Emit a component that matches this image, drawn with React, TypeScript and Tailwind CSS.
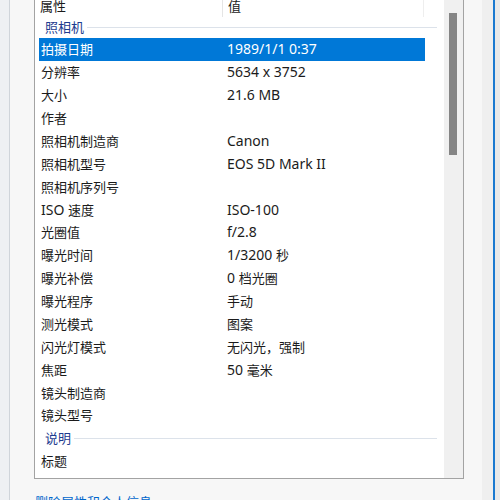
import React from 'react';

const cjk = /([\u2e80-\u9fff\u3000-\u303f\uff00-\uffef]+)/;

// CJK runs get a slightly smaller size so widths match the Windows UI fonts
function T({ s }: { s: string }) {
  return (
    <>
      {s.split(cjk).map((p, i) =>
        cjk.test(p) ? <span key={i} className="text-[13px]">{p}</span> : <span key={i}>{p}</span>
      )}
    </>
  );
}

const camera: [string, string][] = [
  ['拍摄日期', '1989/1/1 0:37'],
  ['分辨率', '5634 x 3752'],
  ['大小', '21.6 MB'],
  ['作者', ''],
  ['照相机制造商', 'Canon'],
  ['照相机型号', 'EOS 5D Mark II'],
  ['照相机序列号', ''],
  ['ISO 速度', 'ISO-100'],
  ['光圈值', 'f/2.8'],
  ['曝光时间', '1/3200 秒'],
  ['曝光补偿', '0 档光圈'],
  ['曝光程序', '手动'],
  ['测光模式', '图案'],
  ['闪光灯模式', '无闪光，强制'],
  ['焦距', '50 毫米'],
  ['镜头制造商', ''],
  ['镜头型号', ''],
];

function Row({ name, value, selected }: { name: string; value: string; selected?: boolean }) {
  return (
    <div
      className={`ml-[4px] w-[386px] h-[22.875px] shrink-0 flex items-center leading-none ${
        selected ? 'bg-[#0078d7] text-white' : 'text-[#1b1b1b]'
      }`}
    >
      <div className="w-[188px] pl-[2px] whitespace-nowrap"><T s={name} /></div>
      <div className="whitespace-nowrap"><T s={value} /></div>
    </div>
  );
}

function Group({ label, height }: { label: string; height: string }) {
  return (
    <div className={`${height} shrink-0 flex items-center pl-[10px] pr-[7px] gap-[3px]`}>
      <span className="text-[13px] leading-none text-[#1e3c8f]">{label}</span>
      <div className="flex-1 h-px bg-[#dce2ea]" />
    </div>
  );
}

export default function App() {
  return (
    <div className="w-[500px] h-[500px] overflow-hidden flex font-['Noto_Sans','Noto_Sans_CJK_SC',sans-serif] text-[14px]">
      <div className="w-[9px] bg-[#eef0f3]" />
      <div className="w-px bg-[#cfd4da]" />
      <div className="w-[472px] bg-[#f7f7f7] flex flex-col pl-[24px]">
        <div className="-mt-[6px] h-[485px] w-[430px] shrink-0 border border-[#a3a3a3] bg-white flex overflow-hidden">
          <div className="flex-1 flex flex-col overflow-hidden">
            <div className="h-[22px] shrink-0 flex items-stretch leading-none text-[#1a1a1a]">
              <div className="w-[187px] pl-[5px] flex items-center"><T s="属性" /></div>
              <div className="w-px bg-[#e5e5e5]" />
              <div className="w-[200px] pl-[5px] flex items-center"><T s="值" /></div>
              <div className="w-px bg-[#eeeeee]" />
            </div>
            <Group label="照相机" height="h-[21px]" />
            {camera.map(([n, v], i) => (
              <Row key={n} name={n} value={v} selected={i === 0} />
            ))}
            <Group label="说明" height="h-[23px]" />
            <Row name="标题" value="" />
          </div>
          <div className="w-[19px] shrink-0 bg-[#f0f0f0] pl-[5px] pt-[18px]">
            <div className="w-[8px] h-[142px] bg-[#858585]" />
          </div>
        </div>
        <div className="ml-[1px] mt-[15px] text-[13px] leading-[17px] text-[#0066cc] whitespace-nowrap">
          删除属性和个人信息
        </div>
      </div>
      <div className="w-[11px] bg-[#efefef]" />
      <div className="w-[2px] bg-[#1c7ad0]" />
      <div className="flex-1 bg-[#e9e9e9]" />
    </div>
  );
}
